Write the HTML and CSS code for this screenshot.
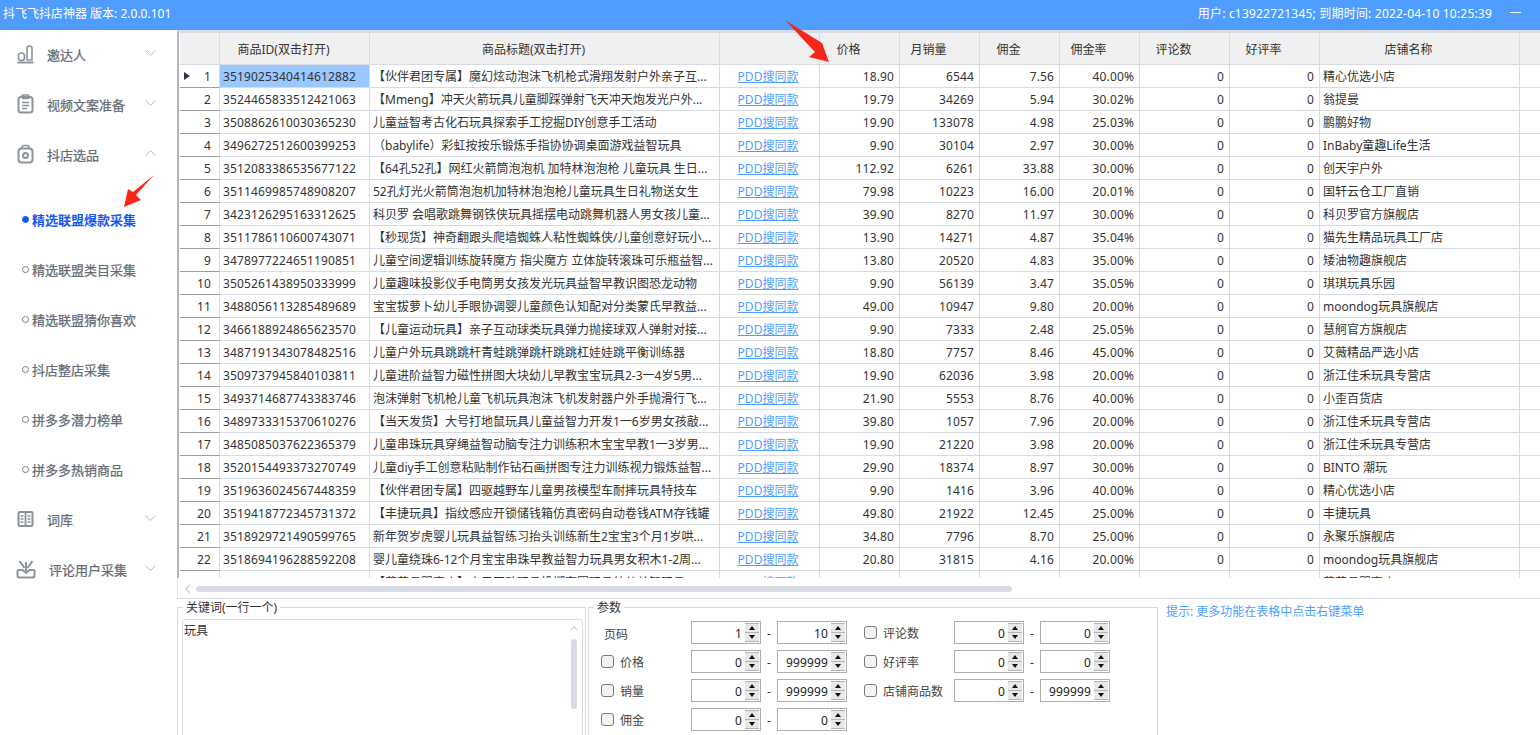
FILE: index.html
```html
<!DOCTYPE html>
<html lang="zh-CN">
<head>
<meta charset="UTF-8">
<title>抖飞飞抖店神器</title>
<link rel="stylesheet" href="styles.css">
</head>
<body>

<div class="titlebar">
  <span>抖飞飞抖店神器 版本: 2.0.0.101</span>
  <div class="titlebar-right">
    <span class="user-info">用户: c13922721345; 到期时间: 2022-04-10 10:25:39</span>
    <span class="min-btn"></span>
  </div>
</div>

<div class="app">
  <div class="sidebar">
    <div class="menu-item">
      <svg class="menu-icon" viewBox="0 0 17 20"><rect x="1.5" y="9" width="6" height="7.5" rx="2.8"/><path d="M10 16V4.5a2.5 2.5 0 0 1 5 0V16z"/><path d="M0.5 18.5h16" stroke-width="2"/></svg>
      <span class="menu-text">邀达人</span>
      <svg class="chev" viewBox="0 0 11 6"><path d="M0.5 0.5l5 5 5-5"/></svg>
    </div>
    <div class="menu-item">
      <svg class="menu-icon" viewBox="0 0 17 20"><rect x="1.5" y="3" width="14" height="15.5" rx="2.5" stroke-width="2"/><rect x="5" y="1" width="7" height="3.5" rx="1"/><path d="M5 8.5h7M5 11.5h7M5 14.5h5"/></svg>
      <span class="menu-text">视频文案准备</span>
      <svg class="chev" viewBox="0 0 11 6"><path d="M0.5 0.5l5 5 5-5"/></svg>
    </div>
    <div class="menu-item">
      <svg class="menu-icon" viewBox="0 0 17 20"><rect x="1.5" y="4.5" width="14" height="14" rx="3" stroke-width="2"/><path d="M5 4.5V3.5a2 2 0 0 1 2-2h3a2 2 0 0 1 2 2v1"/><circle cx="8.5" cy="11.5" r="2.5" stroke-width="2"/></svg>
      <span class="menu-text">抖店选品</span>
      <svg class="chev" viewBox="0 0 11 6"><path d="M0.5 5.5l5-5 5 5"/></svg>
    </div>

    <div class="submenu">
      <div class="sub-item active">精选联盟爆款采集</div>
      <div class="sub-item">精选联盟类目采集</div>
      <div class="sub-item">精选联盟猜你喜欢</div>
      <div class="sub-item">抖店整店采集</div>
      <div class="sub-item">拼多多潜力榜单</div>
      <div class="sub-item">拼多多热销商品</div>
    </div>

    <div class="menu-item">
      <svg class="menu-icon" viewBox="0 0 17 20"><rect x="1.5" y="3" width="14" height="14" rx="1" stroke-width="2"/><path d="M8.5 3v14" stroke-width="1.8"/><path d="M3.5 7h3M3.5 10h3M3.5 13h3M10.5 7h3M10.5 10h3M10.5 13h3"/></svg>
      <span class="menu-text">词库</span>
      <svg class="chev" viewBox="0 0 11 6"><path d="M0.5 0.5l5 5 5-5"/></svg>
    </div>
    <div class="menu-item wide">
      <svg class="menu-icon" viewBox="0 0 20 20"><path d="M1.5 11v5.5a2 2 0 0 0 2 2h13a2 2 0 0 0 2-2V11" stroke-width="2"/><path d="M1.5 11h5l3.5 3 3.5-3h5" stroke-width="2"/><path d="M10 3v9M3.5 2l5 7M16.5 2l-5 7" stroke-width="2"/></svg>
      <span class="menu-text">评论用户采集</span>
      <svg class="chev" viewBox="0 0 11 6"><path d="M0.5 0.5l5 5 5-5"/></svg>
    </div>
  </div>

  <div class="main">
    <div class="grid-wrap">
      <table class="goods">
        <thead>
          <tr><th class="c-rh"></th><th class="c-id">商品ID(双击打开)</th><th class="c-title">商品标题(双击打开)</th><th class="c-link"></th><th class="c-n">价格</th><th class="c-n">月销量</th><th class="c-n">佣金</th><th class="c-n">佣金率</th><th class="c-m">评论数</th><th class="c-m">好评率</th><th class="c-shop">店铺名称</th><th class="c-end"></th></tr>
        </thead>
        <tbody>
          <tr><td class="rh current">1</td><td class="num-l selected">3519025340414612882</td><td>【伙伴君团专属】魔幻炫动泡沫飞机枪式滑翔发射户外亲子互...</td><td class="link"><a>PDD搜同款</a></td><td class="num">18.90</td><td class="num">6544</td><td class="num">7.56</td><td class="num">40.00%</td><td class="num">0</td><td class="num">0</td><td>精心优选小店</td><td></td></tr>
          <tr><td class="rh">2</td><td class="num-l">3524465833512421063</td><td>【Mmeng】冲天火箭玩具儿童脚踩弹射飞天冲天炮发光户外...</td><td class="link"><a>PDD搜同款</a></td><td class="num">19.79</td><td class="num">34269</td><td class="num">5.94</td><td class="num">30.02%</td><td class="num">0</td><td class="num">0</td><td>翁提曼</td><td></td></tr>
          <tr><td class="rh">3</td><td class="num-l">3508862610030365230</td><td>儿童益智考古化石玩具探索手工挖掘DIY创意手工活动</td><td class="link"><a>PDD搜同款</a></td><td class="num">19.90</td><td class="num">133078</td><td class="num">4.98</td><td class="num">25.03%</td><td class="num">0</td><td class="num">0</td><td>鹏鹏好物</td><td></td></tr>
          <tr><td class="rh">4</td><td class="num-l">3496272512600399253</td><td>（babylife）彩虹按按乐锻炼手指协协调桌面游戏益智玩具</td><td class="link"><a>PDD搜同款</a></td><td class="num">9.90</td><td class="num">30104</td><td class="num">2.97</td><td class="num">30.00%</td><td class="num">0</td><td class="num">0</td><td>InBaby童趣Life生活</td><td></td></tr>
          <tr><td class="rh">5</td><td class="num-l">3512083386535677122</td><td>【64孔52孔】网红火箭筒泡泡机 加特林泡泡枪 儿童玩具 生日...</td><td class="link"><a>PDD搜同款</a></td><td class="num">112.92</td><td class="num">6261</td><td class="num">33.88</td><td class="num">30.00%</td><td class="num">0</td><td class="num">0</td><td>创天宇户外</td><td></td></tr>
          <tr><td class="rh">6</td><td class="num-l">3511469985748908207</td><td>52孔灯光火箭筒泡泡机加特林泡泡枪儿童玩具生日礼物送女生</td><td class="link"><a>PDD搜同款</a></td><td class="num">79.98</td><td class="num">10223</td><td class="num">16.00</td><td class="num">20.01%</td><td class="num">0</td><td class="num">0</td><td>国轩云仓工厂直销</td><td></td></tr>
          <tr><td class="rh">7</td><td class="num-l">3423126295163312625</td><td>科贝罗 会唱歌跳舞钢铁侠玩具摇摆电动跳舞机器人男女孩儿童...</td><td class="link"><a>PDD搜同款</a></td><td class="num">39.90</td><td class="num">8270</td><td class="num">11.97</td><td class="num">30.00%</td><td class="num">0</td><td class="num">0</td><td>科贝罗官方旗舰店</td><td></td></tr>
          <tr><td class="rh">8</td><td class="num-l">3511786110600743071</td><td>【秒现货】神奇翻跟头爬墙蜘蛛人粘性蜘蛛侠/儿童创意好玩小...</td><td class="link"><a>PDD搜同款</a></td><td class="num">13.90</td><td class="num">14271</td><td class="num">4.87</td><td class="num">35.04%</td><td class="num">0</td><td class="num">0</td><td>猫先生精品玩具工厂店</td><td></td></tr>
          <tr><td class="rh">9</td><td class="num-l">3478977224651190851</td><td>儿童空间逻辑训练旋转魔方 指尖魔方 立体旋转滚珠可乐瓶益智...</td><td class="link"><a>PDD搜同款</a></td><td class="num">13.80</td><td class="num">20520</td><td class="num">4.83</td><td class="num">35.00%</td><td class="num">0</td><td class="num">0</td><td>矮油物趣旗舰店</td><td></td></tr>
          <tr><td class="rh">10</td><td class="num-l">3505261438950333999</td><td>儿童趣味投影仪手电筒男女孩发光玩具益智早教识图恐龙动物</td><td class="link"><a>PDD搜同款</a></td><td class="num">9.90</td><td class="num">56139</td><td class="num">3.47</td><td class="num">35.05%</td><td class="num">0</td><td class="num">0</td><td>琪琪玩具乐园</td><td></td></tr>
          <tr><td class="rh">11</td><td class="num-l">3488056113285489689</td><td>宝宝拔萝卜幼儿手眼协调婴儿童颜色认知配对分类蒙氏早教益...</td><td class="link"><a>PDD搜同款</a></td><td class="num">49.00</td><td class="num">10947</td><td class="num">9.80</td><td class="num">20.00%</td><td class="num">0</td><td class="num">0</td><td>moondog玩具旗舰店</td><td></td></tr>
          <tr><td class="rh">12</td><td class="num-l">3466188924865623570</td><td>【儿童运动玩具】亲子互动球类玩具弹力抛接球双人弹射对接...</td><td class="link"><a>PDD搜同款</a></td><td class="num">9.90</td><td class="num">7333</td><td class="num">2.48</td><td class="num">25.05%</td><td class="num">0</td><td class="num">0</td><td>慧舸官方旗舰店</td><td></td></tr>
          <tr><td class="rh">13</td><td class="num-l">3487191343078482516</td><td>儿童户外玩具跳跳杆青蛙跳弹跳杆跳跳杠娃娃跳平衡训练器</td><td class="link"><a>PDD搜同款</a></td><td class="num">18.80</td><td class="num">7757</td><td class="num">8.46</td><td class="num">45.00%</td><td class="num">0</td><td class="num">0</td><td>艾薇精品严选小店</td><td></td></tr>
          <tr><td class="rh">14</td><td class="num-l">3509737945840103811</td><td>儿童进阶益智力磁性拼图大块幼儿早教宝宝玩具2-3一4岁5男...</td><td class="link"><a>PDD搜同款</a></td><td class="num">19.90</td><td class="num">62036</td><td class="num">3.98</td><td class="num">20.00%</td><td class="num">0</td><td class="num">0</td><td>浙江佳禾玩具专营店</td><td></td></tr>
          <tr><td class="rh">15</td><td class="num-l">3493714687743383746</td><td>泡沫弹射飞机枪儿童飞机玩具泡沫飞机发射器户外手抛滑行飞...</td><td class="link"><a>PDD搜同款</a></td><td class="num">21.90</td><td class="num">5553</td><td class="num">8.76</td><td class="num">40.00%</td><td class="num">0</td><td class="num">0</td><td>小歪百货店</td><td></td></tr>
          <tr><td class="rh">16</td><td class="num-l">3489733315370610276</td><td>【当天发货】大号打地鼠玩具儿童益智力开发1一6岁男女孩敲...</td><td class="link"><a>PDD搜同款</a></td><td class="num">39.80</td><td class="num">1057</td><td class="num">7.96</td><td class="num">20.00%</td><td class="num">0</td><td class="num">0</td><td>浙江佳禾玩具专营店</td><td></td></tr>
          <tr><td class="rh">17</td><td class="num-l">3485085037622365379</td><td>儿童串珠玩具穿绳益智动脑专注力训练积木宝宝早教1一3岁男...</td><td class="link"><a>PDD搜同款</a></td><td class="num">19.90</td><td class="num">21220</td><td class="num">3.98</td><td class="num">20.00%</td><td class="num">0</td><td class="num">0</td><td>浙江佳禾玩具专营店</td><td></td></tr>
          <tr><td class="rh">18</td><td class="num-l">3520154493373270749</td><td>儿童diy手工创意粘贴制作钻石画拼图专注力训练视力锻炼益智...</td><td class="link"><a>PDD搜同款</a></td><td class="num">29.90</td><td class="num">18374</td><td class="num">8.97</td><td class="num">30.00%</td><td class="num">0</td><td class="num">0</td><td>BINTO 潮玩</td><td></td></tr>
          <tr><td class="rh">19</td><td class="num-l">3519636024567448359</td><td>【伙伴君团专属】四驱越野车儿童男孩模型车耐摔玩具特技车</td><td class="link"><a>PDD搜同款</a></td><td class="num">9.90</td><td class="num">1416</td><td class="num">3.96</td><td class="num">40.00%</td><td class="num">0</td><td class="num">0</td><td>精心优选小店</td><td></td></tr>
          <tr><td class="rh">20</td><td class="num-l">3519418772345731372</td><td>【丰捷玩具】指纹感应开锁储钱箱仿真密码自动卷钱ATM存钱罐</td><td class="link"><a>PDD搜同款</a></td><td class="num">49.80</td><td class="num">21922</td><td class="num">12.45</td><td class="num">25.00%</td><td class="num">0</td><td class="num">0</td><td>丰捷玩具</td><td></td></tr>
          <tr><td class="rh">21</td><td class="num-l">3518929721490599765</td><td>新年贺岁虎婴儿玩具益智练习抬头训练新生2宝宝3个月1岁哄...</td><td class="link"><a>PDD搜同款</a></td><td class="num">34.80</td><td class="num">7796</td><td class="num">8.70</td><td class="num">25.00%</td><td class="num">0</td><td class="num">0</td><td>永聚乐旗舰店</td><td></td></tr>
          <tr><td class="rh">22</td><td class="num-l">3518694196288592208</td><td>婴儿童绕珠6-12个月宝宝串珠早教益智力玩具男女积木1-2周...</td><td class="link"><a>PDD搜同款</a></td><td class="num">20.80</td><td class="num">31815</td><td class="num">4.16</td><td class="num">20.00%</td><td class="num">0</td><td class="num">0</td><td>moondog玩具旗舰店</td><td></td></tr>
          <tr><td class="rh">23</td><td class="num-l">3518971941692815001</td><td>【荣荣母婴商店】亲子互动玩具投掷套圈玩具幼儿益智玩具</td><td class="link"><a>PDD搜同款</a></td><td class="num">9.90</td><td class="num">31894</td><td class="num">2.97</td><td class="num">30.00%</td><td class="num">0</td><td class="num">0</td><td>荣荣母婴商店</td><td></td></tr>
        </tbody>
      </table>
    </div>

    <div class="hscroll">
      <svg class="hscroll-arrow" viewBox="0 0 6 10"><path d="M5 1L1 5l4 4"/></svg>
      <div class="hscroll-thumb"></div>
    </div>

    <div class="bottom">
      <fieldset class="box box-keywords">
        <legend>关键词(一行一个)</legend>
        <div class="keywords">
          <span>玩具</span>
          <div class="vscroll">
            <svg class="vscroll-arrow" viewBox="0 0 10 6"><path d="M1 5l4-4 4 4"/></svg>
            <div class="vscroll-thumb"></div>
          </div>
        </div>
      </fieldset>

      <fieldset class="box box-params">
        <legend>参数</legend>
        <div class="params">
          <div class="p-label plain">页码</div>
          <div class="spin"><span>1</span><i class="spin-btns"><b class="up"></b><b class="down"></b></i></div>
          <div class="dash">-</div>
          <div class="spin"><span>10</span><i class="spin-btns"><b class="up"></b><b class="down"></b></i></div>
          <div class="p-label second"><i class="check"></i>评论数</div>
          <div class="spin"><span>0</span><i class="spin-btns"><b class="up"></b><b class="down"></b></i></div>
          <div class="dash">-</div>
          <div class="spin"><span>0</span><i class="spin-btns"><b class="up"></b><b class="down"></b></i></div>

          <div class="p-label"><i class="check"></i>价格</div>
          <div class="spin"><span>0</span><i class="spin-btns"><b class="up"></b><b class="down"></b></i></div>
          <div class="dash">-</div>
          <div class="spin"><span>999999</span><i class="spin-btns"><b class="up"></b><b class="down"></b></i></div>
          <div class="p-label second"><i class="check"></i>好评率</div>
          <div class="spin"><span>0</span><i class="spin-btns"><b class="up"></b><b class="down"></b></i></div>
          <div class="dash">-</div>
          <div class="spin"><span>0</span><i class="spin-btns"><b class="up"></b><b class="down"></b></i></div>

          <div class="p-label"><i class="check"></i>销量</div>
          <div class="spin"><span>0</span><i class="spin-btns"><b class="up"></b><b class="down"></b></i></div>
          <div class="dash">-</div>
          <div class="spin"><span>999999</span><i class="spin-btns"><b class="up"></b><b class="down"></b></i></div>
          <div class="p-label second"><i class="check"></i>店铺商品数</div>
          <div class="spin"><span>0</span><i class="spin-btns"><b class="up"></b><b class="down"></b></i></div>
          <div class="dash">-</div>
          <div class="spin"><span>999999</span><i class="spin-btns"><b class="up"></b><b class="down"></b></i></div>

          <div class="p-label"><i class="check"></i>佣金</div>
          <div class="spin"><span>0</span><i class="spin-btns"><b class="up"></b><b class="down"></b></i></div>
          <div class="dash">-</div>
          <div class="spin"><span>0</span><i class="spin-btns"><b class="up"></b><b class="down"></b></i></div>
        </div>
      </fieldset>

      <div class="hint">提示: 更多功能在表格中点击右键菜单</div>
    </div>
  </div>
</div>

<!-- red annotation arrows drawn over the screenshot -->
<svg class="annot" viewBox="0 0 1540 735">
  <polygon points="785,20 822,43 829,62 809,57 815,52"/>
  <polygon points="154,175 136,195 141,200 124,207 128,189 133,192"/>
</svg>

</body>
</html>
```

FILE: styles.css
```css
* {
  box-sizing: border-box;
}
html, body {
  height: 100%;
}
body {
  margin: 0;
  overflow: hidden;
  background-color: #fff;
  color: #333;
  font-family: "Noto Sans", "Noto Sans CJK SC", sans-serif;
  font-size: 12px;
}
.titlebar {
  height: 30px;
  background-color: #4f9eff;
  color: #fff;
  display: flex;
  justify-content: space-between;
  align-items: center;
  padding: 0 19px 5px 3px;
}
.titlebar-right {
  display: flex;
  align-items: center;
}
.user-info {
  letter-spacing: 0.2px;
}
.min-btn {
  width: 11px;
  height: 1px;
  background-color: #fff;
  margin-left: 18px;
}
.app {
  display: flex;
  height: 705px;
}

/* sidebar */
.sidebar {
  width: 177px;
  flex-shrink: 0;
}
.menu-item {
  height: 50px;
  display: flex;
  align-items: center;
  padding: 0 0 2px 17px;
  position: relative;
  color: #666b75;
  font-size: 13px;
  -webkit-text-stroke: 0.25px #666b75;
}
.menu-icon {
  width: 17px;
  height: 20px;
  fill: none;
  stroke: #8d929c;
  stroke-width: 1.6;
  flex-shrink: 0;
}
.menu-text {
  margin-left: 13px;
}
.menu-item.wide .menu-icon {
  width: 20px;
  margin-left: -1px;
}
.menu-item.wide .menu-text {
  margin-left: 13px;
}
.chev {
  width: 11px;
  height: 6px;
  fill: none;
  stroke: #b4b8c4;
  stroke-width: 1;
  margin-left: auto;
  margin-right: 21px;
  margin-top: -2px;
}
.submenu {
  margin-top: 15px;
}
.sub-item {
  height: 50px;
  display: flex;
  align-items: center;
  padding: 0 0 2px 22px;
  color: #666b75;
  font-size: 13px;
  -webkit-text-stroke: 0.25px #666b75;
}
.sub-item::before {
  content: "";
  width: 5px;
  height: 5px;
  border: 1px solid #777c86;
  border-radius: 50%;
  margin-right: 3px;
}
.sub-item.active {
  color: #1658f0;
  font-weight: 700;
  -webkit-text-stroke: 0;
}
.sub-item.active::before {
  background-color: #1658f0;
  border-color: #1658f0;
}

/* table */
.main {
  flex: 1;
  min-width: 0;
}
.grid-wrap {
  height: 548px;
  overflow: hidden;
  border-top: 3px solid #d9dbe4;
  border-left: 2px solid #b2b4be;
  padding-left: 1px;
}
.goods {
  table-layout: fixed;
  width: 1360px;
  border-collapse: separate;
  border-spacing: 0;
}
.goods th {
  height: 32px;
  padding: 0 22px 0 0;
  background-color: #f0f0f0;
  border-right: 1px solid #d9dbe4;
  border-bottom: 1px solid #d9dbe4;
  font-weight: 400;
  color: #333;
  text-align: center;
}
.goods td {
  height: 23px;
  padding: 1px 3px 0;
  border-right: 1px solid #d9dbe4;
  border-bottom: 1px solid #d9dbe4;
  white-space: nowrap;
  overflow: hidden;
  line-height: 21px;
  color: #333;
}
.c-rh { width: 40px; }
.c-id { width: 150px; }
.c-title { width: 350px; }
.c-link { width: 100px; }
.c-n { width: 80px; }
.c-m { width: 90px; }
.c-shop { width: 200px; }
.c-end { width: 20px; }
.goods td.rh {
  position: relative;
  text-align: right;
  padding-right: 8px;
  letter-spacing: 0.14px;
  border-bottom-color: #9d9d9d;
}
.goods td.current::before {
  content: "";
  position: absolute;
  left: 4px;
  top: 7px;
  border-left: 6px solid #333;
  border-top: 4.5px solid transparent;
  border-bottom: 4.5px solid transparent;
}
.goods td.num-l {
  letter-spacing: 0.14px;
}
.goods td.selected {
  background-color: #99c7ff;
}
.goods td.num {
  text-align: right;
  padding-right: 5px;
  letter-spacing: 0.14px;
}
.goods td.link {
  text-align: center;
  padding-right: 6px;
}
.goods td.link a {
  color: #4f9eff;
  text-decoration: underline;
}

.hscroll {
  height: 21px;
  border-left: 1px solid #e4e5ea;
  border-bottom: 1px solid #d9dbe4;
  display: flex;
  align-items: center;
  padding: 2px 0 0 7px;
}
.hscroll-arrow {
  width: 6px;
  height: 10px;
  fill: none;
  stroke: #d0d2db;
  stroke-width: 1.5;
}
.hscroll-thumb {
  width: 816px;
  height: 6px;
  margin-left: 5px;
  background-color: #d9dbe4;
  border-radius: 3px;
}

/* lower panel */
.bottom {
  display: flex;
  align-items: flex-start;
}
.box {
  margin: 0;
  padding: 0;
  min-width: 0;
  height: 170px;
  border: 1px solid #d9d9d9;
}
.box legend {
  line-height: 17px;
  padding: 0 3px;
  margin-left: 5px;
}
.box-keywords {
  width: 409px;
}
.box-params {
  width: 570px;
  margin-left: 2px;
}
.keywords {
  position: relative;
  height: 150px;
  margin: 3px 2px 0 4px;
  padding: 3px 1px;
  border: 1px solid #d9dbe4;
  border-radius: 3px;
  line-height: 16px;
}
.vscroll {
  position: absolute;
  top: 6px;
  right: 4px;
  width: 8px;
}
.vscroll-arrow {
  display: block;
  width: 8px;
  height: 5px;
  fill: none;
  stroke: #d0d2db;
  stroke-width: 1.5;
}
.vscroll-thumb {
  width: 6px;
  height: 70px;
  margin: 8px 0 0 1px;
  background-color: #d9dbe4;
  border-radius: 3px;
}
.params {
  display: grid;
  grid-template-columns: 90px 70px 16px 70px 107px 70px 16px 70px;
  grid-auto-rows: 23px;
  row-gap: 6px;
  padding: 5px 0 0 12px;
}
.p-label {
  display: flex;
  align-items: center;
  color: #444;
}
.p-label.plain {
  padding-left: 3px;
  padding-top: 2px;
}
.p-label.second {
  padding-left: 17px;
}
.check {
  width: 13px;
  height: 13px;
  margin-right: 6px;
  border: 1px solid #7a7a7a;
  border-radius: 3px;
  background-color: #f3f3f3;
}
.dash {
  text-align: center;
  line-height: 26px;
}
.spin {
  display: flex;
  align-items: center;
  justify-content: flex-end;
  border: 1px solid #adadad;
  padding-right: 1px;
  letter-spacing: 0.14px;
  color: #222;
}
.spin span {
  margin-right: 3px;
  padding-top: 1px;
}
.spin-btns {
  display: flex;
  flex-direction: column;
  width: 14px;
  height: 19px;
  border-top: 1px solid #b5b5b5;
  border-bottom: 1px solid #b5b5b5;
  background-color: #b5b5b5;
  row-gap: 1px;
}
.spin-btns b {
  flex: 1;
  background-color: #e8e8e8;
  display: flex;
  align-items: center;
  justify-content: center;
}
.spin-btns b::before {
  content: "";
  border-left: 3.5px solid transparent;
  border-right: 3.5px solid transparent;
}
.spin-btns .up::before {
  border-bottom: 4px solid #111;
}
.spin-btns .down::before {
  border-top: 4px solid #111;
}
.hint {
  margin: 5px 0 0 8px;
  color: #4f9eff;
  line-height: 16px;
}

/* arrows on top of everything */
.annot {
  position: absolute;
  left: 0;
  top: 0;
  width: 1540px;
  height: 735px;
  pointer-events: none;
  fill: #f5281b;
}
```
